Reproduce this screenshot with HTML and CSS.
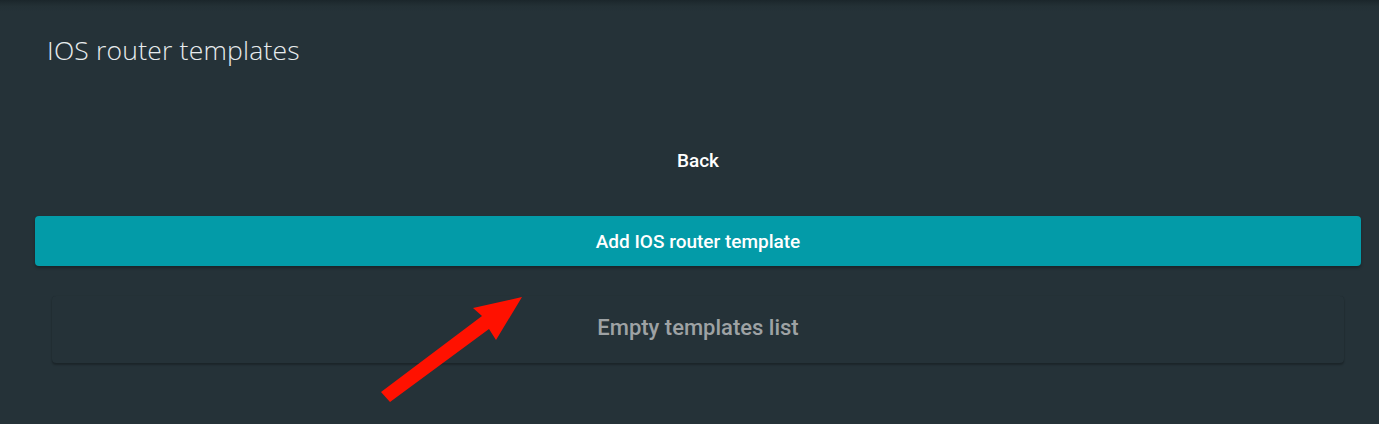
FILE: index.html
```html
<!DOCTYPE html>
<html>
<head>
<meta charset="utf-8">
<link rel="stylesheet" href="styles.css">
</head>
<body>
<div class="page">
  <h1 class="title">IOS router templates</h1>
  <div class="back-row"><button class="back">Back</button></div>
  <button class="add">Add IOS router template</button>
  <div class="card">Empty templates list</div>
</div>
<svg class="arrow" width="1379" height="424" viewBox="0 0 1379 424">
  <polygon points="381,392 482,316 473,308 522,297 496,340 489,329 390,402" fill="#ff1100"/>
</svg>
</body>
</html>
```

FILE: styles.css
```css
html, body {
  margin: 0;
  padding: 0;
  height: 100%;
  background: #253238;
}
body {
  position: relative;
  overflow: hidden;
  font-family: Roboto, "Liberation Sans", sans-serif;
}
.page {
  display: flex;
  flex-direction: column;
  padding: 0 18px 0 35px;
  height: 424px;
  box-sizing: border-box;
  background: linear-gradient(to bottom, #1b262b 0px, #233035 6px, #253238 12px);
}
.title {
  margin: 0;
  padding: 33px 0 0 12px;
  font-family: "Open Sans", sans-serif;
  font-weight: 300;
  font-size: 26.5px;
  line-height: 34px;
  color: #e8ecee;
  letter-spacing: 0.2px;
}
.back-row {
  display: flex;
  justify-content: center;
  margin-top: 82px;
}
.back {
  background: none;
  border: none;
  color: #ffffff;
  font-family: Roboto, sans-serif;
  font-weight: 500;
  font-size: 19px;
  line-height: 24px;
  padding: 0;
}
.add {
  margin-top: 43px;
  height: 50px;
  width: 100%;
  border: none;
  border-radius: 4px;
  background: #039ba8;
  color: #ffffff;
  font-family: Roboto, sans-serif;
  font-weight: 500;
  font-size: 19px;
  box-shadow: 0 2px 3px rgba(0,0,0,0.3);
}
.card {
  margin: 30px 17px 0 17px;
  height: 67px;
  box-sizing: border-box;
  padding-bottom: 4px;
  border-radius: 4px;
  background: #253238;
  box-shadow: 0 2px 2px rgba(0,0,0,0.25), 0 0 1px rgba(0,0,0,0.2);
  display: flex;
  align-items: center;
  justify-content: center;
  color: #9ea2a4;
  font-family: Roboto, sans-serif;
  font-weight: 500;
  font-size: 22px;
}
.arrow {
  position: absolute;
  left: 0;
  top: 0;
  pointer-events: none;
}
```
